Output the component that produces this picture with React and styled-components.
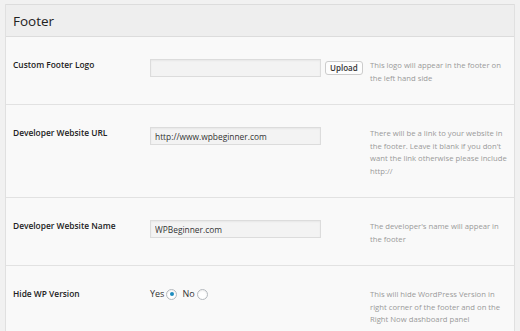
import styled, { createGlobalStyle } from 'styled-components';

const GlobalStyle = createGlobalStyle`
  body {
    margin: 0;
    background: #f1f1f1;
    font-family: "Open Sans", "Liberation Sans", sans-serif;
    color: #333;
  }
`;

const rows = [
  {
    label: 'Custom Footer Logo',
    kind: 'upload',
    value: '',
    desc: 'This logo will appear in the footer on the left hand side',
  },
  {
    label: 'Developer Website URL',
    kind: 'text',
    value: 'http://www.wpbeginner.com',
    desc: "There will be a link to your website in the footer. Leave it blank if you don't want the link otherwise please include http://",
  },
  {
    label: 'Developer Website Name',
    kind: 'text',
    value: 'WPBeginner.com',
    desc: "The developer's name will appear in the footer",
  },
  {
    label: 'Hide WP Version',
    kind: 'radio',
    desc: 'This will hide WordPress Version in right corner of the footer and on the Right Now dashboard panel',
  },
];

export default function App() {
  return (
    <>
      <GlobalStyle />
      <Panel>
        <Header>Footer</Header>
        {rows.map((row) => (
          <Row key={row.label}>
            <Label>{row.label}</Label>
            <Field>
              {row.kind === 'radio' ? (
                <>
                  <Choice>Yes<Radio checked /></Choice>
                  <Choice>No<Radio /></Choice>
                </>
              ) : (
                <>
                  <Input readOnly value={row.value} />
                  {row.kind === 'upload' && <Button>Upload</Button>}
                </>
              )}
            </Field>
            <Desc>{row.desc}</Desc>
          </Row>
        ))}
      </Panel>
    </>
  );
}

const Panel = styled.div`
    margin: 4px 5px 0 5px;
    background: #f9f9f9;
    border-left: 1px solid #e0e0e0;
    border-right: 1px solid #e0e0e0;
    min-height: 327px;
`;

const Header = styled.div`
    height: 31px;
    display: flex;
    align-items: center;
    padding-left: 7px;
    background: #eeeeee;
    border-top: 1px solid #dcdcdc;
    border-bottom: 1px solid #dcdcdc;
    font-size: 13.5px;
    font-weight: 500;
    color: #222;
`;

const Row = styled.div`
    display: grid;
    grid-template-columns: 137px 220px 142px;
    align-items: start;
    padding: 22px 0 20px 7px;
    border-bottom: 1px solid #e2e2e2;

    &:last-child {
        border-bottom: none;
    }
`;

const Label = styled.div`
    font-size: 8.4px;
    font-weight: 600;
    line-height: 12px;
    color: #222;
`;

const Field = styled.div`
    display: flex;
    align-items: center;
    min-height: 12px;
`;

const Input = styled.input`
    box-sizing: border-box;
    width: 171px;
    height: 18px;
    margin: 0;
    padding: 0 4px;
    border: 1px solid #dcdcdc;
    background: #f3f3f3;
    box-shadow: inset 0 1px 2px rgba(0, 0, 0, 0.05);
    font-family: "Open Sans", "Liberation Sans", sans-serif;
    font-size: 8.4px;
    color: #333;
    outline: none;
`;

const Button = styled.button`
    box-sizing: border-box;
    height: 14px;
    margin-left: 4px;
    padding: 0 4px;
    border: 1px solid #cccccc;
    border-radius: 3px;
    background: #fdfdfd;
    font-family: "Open Sans", "Liberation Sans", sans-serif;
    font-size: 8px;
    font-weight: 600;
    line-height: 12px;
    color: #333;
`;

const Choice = styled.span`
    display: flex;
    align-items: center;
    gap: 1px;
    margin-right: 5px;
    font-size: 9px;
    font-weight: 400;
    line-height: 12px;
    color: #333;
`;

const Radio = styled.span`
    box-sizing: border-box;
    position: relative;
    width: 11px;
    height: 11px;
    margin-left: 1px;
    border: 1px solid #b4b9be;
    border-radius: 50%;
    background: #fff;
    box-shadow: inset 0 1px 2px rgba(0, 0, 0, 0.07);

    &::after {
        content: '';
        display: ${(props) => (props.checked ? 'block' : 'none')};
        position: absolute;
        left: 2.5px;
        top: 2.5px;
        width: 4px;
        height: 4px;
        border-radius: 50%;
        background: #1e8cbe;
    }
`;

const Desc = styled.div`
    font-size: 7.7px;
    line-height: 12.5px;
    color: #999;
`;
